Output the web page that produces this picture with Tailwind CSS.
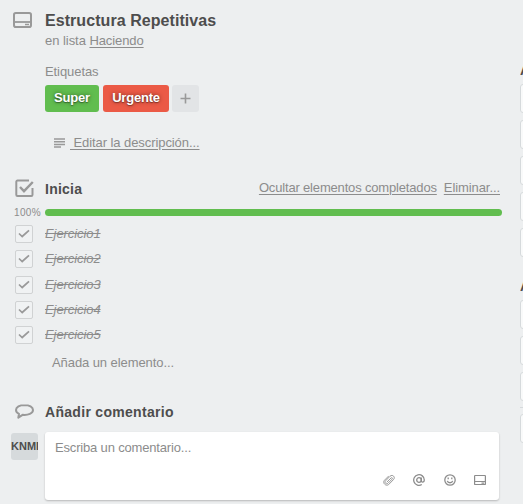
<!DOCTYPE html>
<html lang="es">
<head>
<meta charset="utf-8">
<title>Estructura Repetitivas</title>
<script src="https://cdn.jsdelivr.net/npm/@tailwindcss/browser@4"></script>
</head>
<body class="bg-[#edeff0] overflow-hidden">
<div class="flex h-[504px] w-[523px] overflow-hidden bg-[#edeff0] font-['Liberation_Sans',Arial,sans-serif] text-[13px] tracking-[-0.08px] text-[#8c8c8c]">
  <main class="w-[520px] shrink-0 pt-[10px]">
    <header class="flex h-[52px]">
      <div class="w-[45px] shrink-0 pt-[2px] pl-[13px]">
        <svg width="19" height="16" viewBox="0 0 19 16" fill="none" stroke="#999" stroke-width="2"><rect x="1" y="1" width="17" height="14" rx="1.800"/><path d="M1 10h17" stroke-width="1.800"/><path d="M12 12.500h4" stroke-width="1.500"/></svg>
      </div>
      <div>
        <h1 class="h-[20px] pt-px text-[16px] leading-[20px] font-bold tracking-[0.06px] text-[#4d4d4d] whitespace-nowrap">Estructura Repetitivas</h1>
        <p class="mt-[1px] h-[20px] leading-[20px] tracking-[-0.04px]">en lista <a class="tracking-[-0.1px] underline underline-offset-2">Haciendo</a></p>
      </div>
    </header>

    <section class="h-[112px] pl-[45px]">
      <h3 class="h-[20px] leading-[20px]">Etiquetas</h3>
      <div class="mt-[3px] flex h-[27px] gap-1 text-[13px] leading-[26px] font-bold tracking-[-0.2px] text-white [text-shadow:0_0_4px_rgba(0,0,0,0.5),0_1px_1px_rgba(0,0,0,0.35)]">
        <span class="w-[54px] rounded-[3px] bg-[#61bd4f] text-center">Super</span>
        <span class="w-[66px] rounded-[3px] bg-[#eb5a46] text-center">Urgente</span>
        <span class="flex w-[27px] -ml-px items-center justify-center rounded-[3px] bg-[#e2e4e6]"><svg width="11" height="11" viewBox="0 0 11 11" stroke="#999" stroke-width="1.600"><path d="M5.500 .5v10M.5 5.500h10"/></svg></span>
      </div>
      <div class="mt-[21px] flex h-[20px] items-center pl-[9px] leading-[20px]">
        <svg class="shrink-0" width="11" height="10" viewBox="0 0 11 10" stroke="#999" stroke-width="1.500"><path d="M0 1h11M0 3.700h11M0 6.400h11M0 9.100h7"/></svg>
        <a class="ml-[5px] whitespace-pre underline underline-offset-2"> Editar la descripción...</a>
      </div>
    </section>

    <section class="h-[226px]">
      <div class="flex h-[30px] pt-[4px]">
        <div class="w-[45px] shrink-0 pt-px pl-[15px]">
          <svg width="19" height="19" viewBox="0 0 19 19" fill="none" stroke="#999" stroke-width="2"><path d="M14 1.500H2.500a1.200 1.200 0 0 0-1.200 1.200v13.100A1.200 1.200 0 0 0 2.500 17h13.800a1.200 1.200 0 0 0 1.200-1.200V9"/><path d="M5 8l4 4.200L17.800 3" stroke-width="2.400"/></svg>
        </div>
        <h2 class="h-[20px] grow pt-px text-[14px] leading-[20px] font-bold tracking-[0.25px] text-[#4d4d4d]">Inicia</h2>
        <div class="flex gap-[7px] pr-[20px] leading-[20px] whitespace-nowrap"><a class="tracking-[-0.17px] underline underline-offset-2">Ocultar elementos completados</a><a class="underline underline-offset-2">Eliminar...</a></div>
      </div>
      <div class="flex h-[17px] items-center">
        <span class="w-[45px] shrink-0 pl-[14px] text-[10px] leading-[12px] tracking-[0.35px]">100%</span>
        <div class="h-[7px] w-[457px] rounded-[4px] bg-[#61bd4f]"></div>
      </div>
      <ul class="pt-[4px]">
        <li class="flex h-[25.25px] items-start"><span class="ml-[15px] mr-[12px] flex size-[18px] items-center justify-center rounded-[2px] border border-[#d0d2d3] bg-[#f0f2f3]"><svg width="12" height="10" viewBox="0 0 12 10" fill="none" stroke="#999" stroke-width="1.700"><path d="M1 4.500l3.200 3L11 1.300"/></svg></span><span class="leading-[18px] italic line-through">Ejercicio1</span></li>
        <li class="flex h-[25.25px] items-start"><span class="ml-[15px] mr-[12px] flex size-[18px] items-center justify-center rounded-[2px] border border-[#d0d2d3] bg-[#f0f2f3]"><svg width="12" height="10" viewBox="0 0 12 10" fill="none" stroke="#999" stroke-width="1.700"><path d="M1 4.500l3.200 3L11 1.300"/></svg></span><span class="leading-[18px] italic line-through">Ejercicio2</span></li>
        <li class="flex h-[25.25px] items-start"><span class="ml-[15px] mr-[12px] flex size-[18px] items-center justify-center rounded-[2px] border border-[#d0d2d3] bg-[#f0f2f3]"><svg width="12" height="10" viewBox="0 0 12 10" fill="none" stroke="#999" stroke-width="1.700"><path d="M1 4.500l3.200 3L11 1.300"/></svg></span><span class="leading-[18px] italic line-through">Ejercicio3</span></li>
        <li class="flex h-[25.25px] items-start"><span class="ml-[15px] mr-[12px] flex size-[18px] items-center justify-center rounded-[2px] border border-[#d0d2d3] bg-[#f0f2f3]"><svg width="12" height="10" viewBox="0 0 12 10" fill="none" stroke="#999" stroke-width="1.700"><path d="M1 4.500l3.200 3L11 1.300"/></svg></span><span class="leading-[18px] italic line-through">Ejercicio4</span></li>
        <li class="flex h-[25.25px] items-start"><span class="ml-[15px] mr-[12px] flex size-[18px] items-center justify-center rounded-[2px] border border-[#d0d2d3] bg-[#f0f2f3]"><svg width="12" height="10" viewBox="0 0 12 10" fill="none" stroke="#999" stroke-width="1.700"><path d="M1 4.500l3.200 3L11 1.300"/></svg></span><span class="leading-[18px] italic line-through">Ejercicio5</span></li>
      </ul>
      <p class="mt-[2px] pl-[52px] leading-[20px]">Añada un elemento...</p>
    </section>

    <section>
      <div class="flex h-[32px] pt-[2px]">
        <div class="w-[45px] shrink-0 pt-[2px] pl-[15px]">
          <svg width="19" height="15" viewBox="0 0 19 15" fill="none" stroke="#999" stroke-width="2" stroke-linejoin="round"><path d="M9.500 1C4.700 1 1 3.100 1 6c0 1.700 1.200 3 3 3.900L3.300 13.700l4.300-2.900c5.600.6 10.400-1.500 10.400-4.800C18 3.100 14.300 1 9.500 1z"/></svg>
        </div>
        <h2 class="text-[14px] leading-[20px] font-bold tracking-[0.3px] text-[#4d4d4d]">Añadir comentario</h2>
      </div>
      <div class="flex items-start">
        <div class="mt-px mr-[7px] ml-[11px] h-[27px] w-[27px] shrink-0 overflow-hidden rounded-[3px] bg-[#d6dadc] text-[11px] leading-[27px] font-bold tracking-normal whitespace-nowrap text-[#4d4d4d]">KNMR</div>
        <div class="flex h-[68px] w-[454px] flex-col justify-between rounded-[3px] bg-white shadow-[0_1px_2px_rgba(0,0,0,0.23)]">
          <p class="pt-[6px] pl-[10px] leading-[20px] tracking-[-0.17px]">Escriba un comentario...</p>
          <div class="flex h-[26px] items-start justify-end gap-[18.500px] pr-[13px]">
            <svg width="12" height="12" viewBox="0 0 12 12" fill="none" stroke="#999" stroke-width="1" stroke-linecap="round"><path d="M4 8l4-4c.9-.9 2 .2 1.100 1.100L5 9.200C3.300 10.900.9 8.500 2.600 6.800L7 2.300c2.500-2.500 5.900.9 3.400 3.400L5.700 10.500c-2.500 2.300-6.600-1.500-4.300-4.200L5.500 2.200"/></svg>
            <svg width="12" height="12" viewBox="0 0 12 12" fill="none" stroke="#8c8c8c" stroke-width="1.300"><circle cx="6" cy="6" r="2.300"/><path d="M8.300 3.600v3.200c0 1.900 3 1.700 3-.9A5.300 5.300 0 1 0 8.800 10.500"/></svg>
            <svg width="12" height="12" viewBox="0 0 12 12" fill="none" stroke="#8c8c8c" stroke-width="1.300"><circle cx="6" cy="6" r="5.200"/><path d="M4.200 3.500v1.700M7.800 3.500v1.700M3.300 6.800c.7 2.600 4.700 2.600 5.400 0"/></svg>
            <svg width="12" height="12" viewBox="0 0 12 12" fill="none" stroke="#8c8c8c" stroke-width="1.200"><rect x=".6" y="1.500" width="10.800" height="9" rx=".6"/><path d="M1 7.500h10M7.500 9.100h2.700"/></svg>
          </div>
        </div>
      </div>
    </section>
  </main>

  <aside class="w-[3px] shrink-0 overflow-hidden pt-[60px] whitespace-nowrap">
    <h3 class="h-[24px] text-[14px] leading-[20px] font-bold text-[#4d4d4d]">Añadir</h3>
    <div class="flex w-[120px] flex-col gap-[7px]">
      <div class="h-[29px] rounded-[3px] border border-[#d6dadc] bg-[#f9fafa]"></div>
      <div class="h-[29px] rounded-[3px] border border-[#d6dadc] bg-[#f9fafa]"></div>
      <div class="h-[29px] rounded-[3px] border border-[#d6dadc] bg-[#f9fafa]"></div>
      <div class="h-[29px] rounded-[3px] border border-[#d6dadc] bg-[#f9fafa]"></div>
      <div class="h-[29px] rounded-[3px] border border-[#d6dadc] bg-[#f9fafa]"></div>
    </div>
    <h3 class="mt-[19px] h-[24px] text-[14px] leading-[20px] font-bold text-[#4d4d4d]">Acciones</h3>
    <div class="flex w-[120px] flex-col gap-[7px]">
      <div class="h-[29px] rounded-[3px] border border-[#d6dadc] bg-[#f9fafa]"></div>
      <div class="h-[29px] rounded-[3px] border border-[#d6dadc] bg-[#f9fafa]"></div>
      <div class="h-[29px] rounded-[3px] border border-[#d6dadc] bg-[#f9fafa]"></div>
    </div>
    <div class="my-[6px] h-px w-[120px] bg-[#d6dadc]"></div>
    <div class="h-[29px] w-[120px] rounded-[3px] border border-[#d6dadc] bg-[#f9fafa]"></div>
  </aside>
</div>
</body>
</html>
